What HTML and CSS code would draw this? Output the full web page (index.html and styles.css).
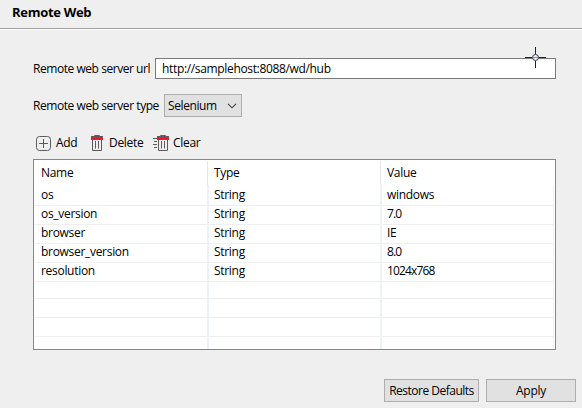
FILE: index.html
```
<!DOCTYPE html>
<html lang="en">
<head>
<meta charset="utf-8">
<title>Remote Web</title>
<link rel="stylesheet" href="styles.css">
</head>
<body>
<header class="title"><h1>Remote Web</h1></header>
<main class="content">
  <div class="field url-row">
    <label class="url-label">Remote web server url</label>
    <div class="input">http://samplehost:8088/wd/hub
      <svg class="crosshair" width="21" height="21" viewBox="0 0 21 21" fill="none"><path d="M0 10.5h7M14 10.5h7M10.5 0v7M10.5 14v7" stroke="#1b2238"/><circle cx="10.5" cy="10.5" r="3" fill="#eee" stroke="#343b4c"/><path d="M8 10.5h5" stroke="#999"/></svg>
    </div>
  </div>
  <div class="field type-row">
    <label class="type-label">Remote web server type</label>
    <div class="select"><span>Selenium</span>
      <svg width="10" height="6" viewBox="0 0 10 6"><path d="M1 .8l4 4 4-4" fill="none" stroke="#444" stroke-width="1.1"/></svg>
    </div>
  </div>
  <div class="toolbar">
    <div class="tool add"><svg width="15" height="15" viewBox="0 0 15 15" fill="none" stroke="#5c5c5c"><rect x=".5" y=".5" width="14" height="14" rx="3"/><path d="M3 7.5h9M7.5 3v9"/></svg><span>Add</span></div>
    <div class="tool delete"><svg width="12" height="16" viewBox="0 0 12 16" fill="none"><path d="M3.5 1.5V.5h5v1M1.5 5v10.5h9V5M4.5 6v7.5M7.5 6v7.5M0 1.5h12" stroke="#5c5c5c"/><path d="M0 2h12v3H0z" fill="#f5152b"/></svg><span>Delete</span></div>
    <div class="tool clear"><svg width="16" height="16" viewBox="0 0 16 16" fill="none"><path d="M7.5 1.5V.5h5v1M5.5 5v10.5h9V5M8.5 6v7.5M11.5 6v7.5M4 1.5h12M0 3.5h4M1 6.5h3M0 9.5h4M1 12.5h3" stroke="#5c5c5c"/><path d="M4 2h12v3H4z" fill="#f5152b"/></svg><span>Clear</span></div>
  </div>
  <div class="table">
    <div class="row head"><span>Name</span><span>Type</span><span>Value</span></div>
    <div class="row"><span>os</span><span>String</span><span>windows</span></div>
    <div class="row"><span>os_version</span><span>String</span><span class="digits">7.0</span></div>
    <div class="row"><span>browser</span><span>String</span><span>IE</span></div>
    <div class="row"><span>browser_version</span><span>String</span><span class="digits">8.0</span></div>
    <div class="row"><span>resolution</span><span>String</span><span class="digits">1024x768</span></div>
    <div class="row"><span></span><span></span><span></span></div>
    <div class="row"><span></span><span></span><span></span></div>
    <div class="row"><span></span><span></span><span></span></div>
    <div class="row last"><span></span><span></span><span></span></div>
  </div>
</main>
<footer class="actions"><div class="button restore">Restore Defaults</div><div class="button apply">Apply</div></footer>
</body>
</html>
```
FILE: styles.css
```
* { box-sizing: border-box; }
body { margin: 0; height: 408px; overflow: hidden; background: #efefef; color: #000; font: 12px/18px "Open Sans", "Noto Sans", sans-serif; letter-spacing: -0.3px; white-space: nowrap; }
.title { height: 30px; border-bottom: 1px solid #fff; padding: 2px 0 0 12px; box-shadow: inset 0 -1px #a0a0a0; }
h1 { margin: 0; font-size: 13px; line-height: 20px; font-weight: 700; letter-spacing: -0.3px; }
.content { padding: 28px 26px 0 33px; }
.field { display: flex; align-items: center; }
.url-row { height: 21px; }
.url-label { width: 122px; letter-spacing: -0.45px; }
.input { position: relative; width: 401px; height: 21px; border: 1px solid #7a7a7a; background: #fff; padding: 1px 0 0 6px; line-height: 18px; letter-spacing: -0.34px; }
.crosshair { position: absolute; left: 369px; top: -12px; }
.type-row { height: 23px; margin-top: 15px; }
.type-label { width: 131px; letter-spacing: -0.44px; }
.select { display: flex; align-items: center; justify-content: space-between; width: 78px; height: 23px; border: 1px solid #adadad; background: #e1e1e1; padding: 0 4px 0 3px; letter-spacing: -0.4px; }
.toolbar { display: flex; align-items: center; height: 18px; margin: 17px 0 7px 3px; }
.tool { display: flex; align-items: center; }
.add { width: 55px; gap: 5px; }
.delete { width: 62px; gap: 6px; }
.clear { gap: 4px; }
.table { width: 523px; height: 191px; overflow: hidden; border: 1px solid #828790; background: #fff; padding: 1px; }
.row { display: grid; grid-template-columns: 174px 173px 172px; height: 19px; line-height: 20px; }
.row span { border-bottom: 1px solid #efefef; border-right: 2px solid #edf2fa; padding-left: 6px; }
.row span:nth-child(2), .row span:nth-child(3) { padding-left: 5px; }
.row span:last-child { border-right-width: 1px; }
.row .digits { letter-spacing: -0.85px; }
.head { height: 24px; line-height: 24px; }
.head span { border-bottom: 0; border-right: 1px solid #e5e5e5; margin-right: 1px; }
.head span:last-child { border: 0; }
.last { height: 12px; }
.last span { border-bottom: 0; }
.actions { display: flex; justify-content: flex-end; gap: 7px; padding: 29px 6px 0 0; }
.button { height: 23px; border: 1px solid #adadad; background: #e1e1e1; line-height: 22px; text-align: center; }
.restore { width: 95px; letter-spacing: -0.5px; }
.apply { width: 90px; }
```
